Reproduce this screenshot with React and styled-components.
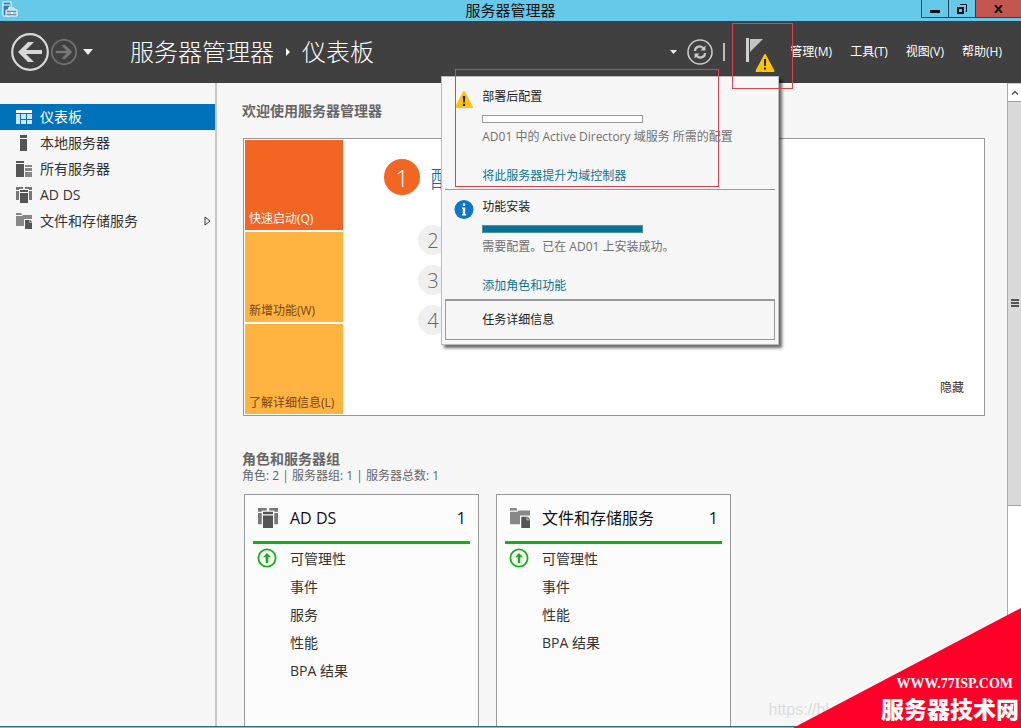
import React from 'react'
import styled, { createGlobalStyle } from 'styled-components'

const GlobalStyle = createGlobalStyle`
    *, *::before, *::after{
        box-sizing: border-box;
    }

    body{
        margin: 0;
        overflow: hidden;
        font-family: 'Open Sans', 'Noto Sans CJK SC', sans-serif;
        font-size: 14px;
        color: #333;
    }

    button{
        font: inherit;
        color: inherit;
        background: none;
        border: none;
        padding: 0;
        cursor: pointer;
    }

    h1, h2, h3, p, ul, ol{
        margin: 0;
        padding: 0;
        font-size: inherit;
        font-weight: 400;
        list-style: none;
    }

    a{
        color: inherit;
        text-decoration: none;
    }

    svg{
        display: block;
        flex: none;
    }
`;

const Window = styled.div`
    position: relative;
    display: flex;
    flex-direction: column;
    height: 100vh;
    overflow: hidden;
    background: #f7f7f7;
`;

const TitleBar = styled.div`
    display: grid;
    grid-template-columns: 1fr auto 1fr;
    height: 21px;
    flex: none;
    background: #66c9e9;
`;

const AppIcon = styled.div`
    padding: 1px 2px;
`;

const WindowTitle = styled.h1`
    font-size: 15px;
    line-height: 20px;
    color: #111;
`;

const WindowControls = styled.div`
    display: flex;
    justify-content: flex-end;
    height: 18px;
`;

const WindowButton = styled.button`
    display: flex;
    justify-content: center;
    align-items: center;
    width: ${({ $danger }) => ($danger ? '46px' : '27px')};
    background: ${({ $danger }) => ($danger ? '#c4554f' : 'transparent')};
    border: 1px solid #1f4452;
    border-top: none;
    border-right: none;
`;

const Header = styled.header`
    position: relative;
    z-index: 10;
    display: flex;
    align-items: center;
    height: 62px;
    flex: none;
    padding: 0 19px 0 11px;
    background: #404040;
    color: #fff;
`;

const History = styled.div`
    display: flex;
    align-items: center;
    gap: 2px;
    width: 119px;
`;

const HistoryMenu = styled.button`
    padding: 0 4px;
`;

const Breadcrumb = styled.div`
    display: flex;
    align-items: center;
    gap: 12px;
    font-size: 24px;
    font-weight: 300;
    line-height: 36px;
    white-space: nowrap;
`;

const HeaderTools = styled.div`
    display: flex;
    align-items: center;
    align-self: stretch;
    margin-left: auto;
`;

const RefreshGroup = styled.div`
    display: flex;
    align-items: center;
    gap: 10px;
`;

const Separator = styled.span`
    width: 2px;
    height: 18px;
    background: #bbb;
`;

const Notifications = styled.div`
    position: relative;
    align-self: stretch;
    width: 52px;
    margin-left: 7px;
`;

const FlagButton = styled.button`
    display: block;
    padding: 16px 8px 0 13px;
`;

const Highlight = styled.span`
    position: absolute;
    z-index: 2;
    border: 1px solid #d8444f;
    pointer-events: none;
`;

const FlagHighlight = styled(Highlight)`
    top: 2px;
    left: 0;
    width: 61px;
    height: 66px;
`;

const TaskHighlight = styled(Highlight)`
    top: -8px;
    left: 13px;
    width: 264px;
    height: 118px;
`;

const Menu = styled.nav`
    display: flex;
    gap: 18px;
    margin-left: 6px;
    font-size: 12px;
    line-height: 20px;
    white-space: nowrap;
`;

const Popup = styled.div`
    position: absolute;
    top: 55px;
    right: 5px;
    width: 338px;
    padding: 3px 3px 4px;
    background: #f7f7f7;
    border: 1px solid #bbb;
    box-shadow: 3px 3px 3px rgba(0, 0, 0, 0.6);
    font-size: 12px;
    line-height: 20px;
    color: #222;
    white-space: nowrap;
`;

const Task = styled.section`
    display: flex;
    gap: 8px;
    height: 110px;
    padding: 7px 0 0 9px;
    border-bottom: 1px solid #999;
`;

const TaskIcon = styled.div`
    width: 20px;
    padding-top: 3px;
`;

const TaskProgress = styled.div`
    width: 161px;
    height: 8px;
    margin: 8px 0 4px;
    background: ${({ $done }) => ($done ? '#0a7395' : '#fff')};
    border: 1px solid ${({ $done }) => ($done ? '#4f8fa5' : '#999')};
`;

const TaskText = styled.p`
    color: #707070;
`;

const TaskLink = styled.a`
    display: block;
    margin-top: 19px;
    color: #0a7395;
`;

const DetailsButton = styled.button`
    display: block;
    width: 100%;
    height: 40px;
    padding-left: 36px;
    border: 1px solid #999;
    text-align: left;
`;

const Body = styled.div`
    display: flex;
    flex: 1;
    min-height: 0;
`;

const Sidebar = styled.nav`
    width: 217px;
    flex: none;
    padding-top: 21px;
    border-right: 2px solid #c8c8c8;
`;

const SidebarLink = styled.a`
    display: flex;
    align-items: center;
    gap: 8px;
    height: 26px;
    padding: 0 3px 0 16px;
    background: ${({ $active }) => ($active ? '#0072bc' : 'transparent')};
    color: ${({ $active }) => ($active ? '#fff' : '#333')};
    white-space: nowrap;
`;

const SidebarLabel = styled.span`
    flex: 1;
    line-height: 20px;
`;

const Content = styled.main`
    display: flex;
    flex-direction: column;
    flex: 1;
    min-width: 0;
    padding: 18px 22px 0 25px;
    overflow: hidden;
`;

const SectionTitle = styled.h2`
    font-size: 14px;
    font-weight: 700;
    line-height: 20px;
    color: #666;
`;

const Welcome = styled.section`
    display: flex;
    flex: none;
    margin: 17px 0 33px 1px;
    padding: 1px;
    background: #fff;
    border: 1px solid #999;
`;

const Tiles = styled.div`
    display: flex;
    flex-direction: column;
    gap: 2px;
    width: 98px;
`;

const Tile = styled.button`
    display: flex;
    align-items: flex-end;
    height: 90px;
    padding: 0 4px 1px;
    background: ${({ $active }) => ($active ? '#f26522' : '#ffb340')};
    color: ${({ $active }) => ($active ? '#fff' : '#7a4310')};
    font-size: 12px;
    line-height: 20px;
    white-space: nowrap;
`;

const Steps = styled.ol`
    flex: 1;
    padding: 19px 0 0 41px;
`;

const Step = styled.li`
    display: flex;
    align-items: center;
    gap: 10px;
    height: ${({ $main }) => ($main ? '36px' : '40px')};
    margin-left: ${({ $main }) => ($main ? '0' : '34px')};
    margin-bottom: ${({ $main }) => ($main ? '25px' : '0')};
    font-size: 24px;
    font-weight: 300;
    color: #0b72a8;
`;

const StepNumber = styled.span`
    display: flex;
    justify-content: center;
    align-items: center;
    width: ${({ $main }) => ($main ? '36px' : '30px')};
    height: ${({ $main }) => ($main ? '36px' : '30px')};
    border-radius: 50%;
    background: ${({ $main }) => ($main ? '#f26522' : '#f0f0f0')};
    color: ${({ $main }) => ($main ? '#fff' : '#666')};
    font-size: ${({ $main }) => ($main ? '24px' : '20px')};
`;

const HideButton = styled.button`
    align-self: flex-end;
    margin: 0 19px 16px 0;
    font-size: 12px;
    line-height: 20px;
`;

const Summary = styled.p`
    font-size: 12px;
    line-height: 14px;
    color: #666;
`;

const Cards = styled.div`
    display: flex;
    flex: 1;
    gap: 17px;
    margin: 11px 0 0 2px;
`;

const Card = styled.article`
    width: 235px;
    padding: 0 8px;
    background: #fcfcfc;
    border: 1px solid #999;
    border-bottom: none;
`;

const CardHeader = styled.header`
    display: flex;
    align-items: center;
    gap: 12px;
    height: 49px;
    padding: 0 4px 0 5px;
    border-bottom: 3px solid #14b114;
    font-size: 16px;
    line-height: 24px;
    color: #111;
`;

const CardTitle = styled.h3`
    flex: 1;
`;

const CardRow = styled.li`
    display: flex;
    align-items: center;
    gap: 13px;
    height: 28px;
    padding-left: 4px;
`;

const CardIcon = styled.span`
    width: 20px;
    height: 20px;
`;

const ScrollBar = styled.div`
    display: flex;
    flex-direction: column;
    width: 14px;
    flex: none;
    background: #fff;
    border-left: 1px solid #aaa;
`;

const ScrollUp = styled.button`
    display: flex;
    justify-content: center;
    align-items: center;
    height: 18px;
    border-top: 1px solid #ccc;
`;

const ScrollThumb = styled.div`
    display: flex;
    justify-content: center;
    align-items: center;
    flex: 0 0 63%;
    background: #dadada;
    border: 1px solid #a0a0a0;
    border-width: 1px 0;
`;

const StatusLine = styled.div`
    height: 2px;
    flex: none;
    background: #8dbcc9;
    border-top: 1px solid #2f6c7c;
`;

const Ribbon = styled.div`
    position: absolute;
    z-index: 20;
    right: 0;
    bottom: 0;
    display: flex;
    flex-direction: column;
    align-items: flex-end;
    justify-content: flex-end;
    width: 228px;
    height: 120px;
    padding: 0 2px 1px 0;
    background: #ff0029;
    clip-path: polygon(100% 0, 100% 100%, 0 100%);
    color: #fff;
    white-space: nowrap;
`;

const RibbonUrl = styled.span`
    padding-right: 6px;
    font-family: 'Liberation Serif', serif;
    font-size: 14px;
    font-weight: 700;
    line-height: 16px;
`;

const RibbonName = styled.span`
    font-size: 23px;
    font-weight: 900;
    line-height: 35px;
`;

const Watermark = styled.span`
    position: absolute;
    right: 192px;
    bottom: 8px;
    font-family: 'Liberation Sans', sans-serif;
    font-size: 16px;
    line-height: 20px;
    color: #dcdcdc;
`;

const LogoIcon = () => (
    <svg width="17" height="17" viewBox="0 0 17 17">
        <path d="M1 1h8v5H7v9H1z" fill="#2b7fc0" stroke="#fff" />
        <path d="M1 4h7" stroke="#fff" />
        <path d="M4 9h11v6H4z" fill="#6e93ad" stroke="#fff" />
        <path d="M7 9V7h5v2M4 12h11" fill="none" stroke="#fff" />
        <path d="M9 11h2v2H9z" fill="#fff" />
    </svg>
)

const CircleArrow = ({ size, color, back }) => (
    <svg width={size} height={size} viewBox="0 0 38 38">
        <circle cx="19" cy="19" r="17.8" fill="none" stroke={color} strokeWidth="2.2" />
        <path
            d="M7 19l10-10h6l-8 8h16v4H15l8 8h-6z"
            fill={color}
            transform={back ? undefined : 'rotate(180 19 19)'}
        />
    </svg>
)

const CaretDown = ({ width = 10, height = 6 }) => (
    <svg width={width} height={height} viewBox="0 0 10 6" preserveAspectRatio="none">
        <path d="M0 0h10L5 6z" fill="#eee" />
    </svg>
)

const CaretRight = () => (
    <svg width="4" height="8" viewBox="0 0 4 8">
        <path d="M0 0l4 4-4 4z" fill="#fff" />
    </svg>
)

const RefreshIcon = () => (
    <svg width="26" height="26" viewBox="0 0 26 26" fill="none" stroke="#c8c8c8">
        <circle cx="13" cy="13" r="12" strokeWidth="1.6" />
        <path d="M8 12c0-5 6-6 8.500-2.500M18 14c0 5-6 6-8.500 2.500" strokeWidth="2.200" />
        <path d="M18.500 6.500v5h-5zM7.500 19.500v-5h5z" fill="#c8c8c8" stroke="none" />
    </svg>
)

const WarningTriangle = () => (
    <svg width="20" height="20" viewBox="0 0 20 20">
        <path d="M10 2l8 15H2z" fill="#ffc20e" stroke="#ffc20e" strokeWidth="2" strokeLinejoin="round" />
        <path d="M8.800 6h2.400l-.4 6.500H9.200zM8.900 13.700h2.200v2.200H8.900z" fill="#222" />
    </svg>
)

const FlagIcon = () => (
    <svg width="31" height="37" viewBox="0 0 31 37">
        <path d="M1 1h3v24H1z" fill="#d0d0d0" />
        <path d="M5 2h13L5 15z" fill="#c4c4c4" />
        <path d="M20 18l8.500 16h-17z" fill="#ffc20e" stroke="#ffc20e" strokeWidth="2" strokeLinejoin="round" />
        <path d="M18.900 22h2.200l-.3 7h-1.600zM19 30.500h2v2h-2z" fill="#222" />
    </svg>
)

const InfoIcon = () => (
    <svg width="20" height="20" viewBox="0 0 20 20">
        <circle cx="10" cy="9.500" r="9.500" fill="#0a78c8" />
        <path d="M8.800 3.500h2.400v2.400H8.800zM8 7.500h3.200v6.400h.8v1.600H8v-1.600h.8V9H8z" fill="#fff" />
    </svg>
)

const DashboardIcon = () => (
    <svg width="16" height="16" viewBox="0 0 16 16" fill="#cfe6f6">
        <path d="M0 1h16v3H0z" fill="#fff" />
        <path d="M0 5h4v10H0zM5 5h5v5H5zM11 5h5v5h-5zM5 11h5v4H5zM11 11h5v4h-5z" />
    </svg>
)

const ServerIcon = () => (
    <svg width="16" height="16" viewBox="0 0 16 16" fill="#555">
        <path d="M4 0h7v3H4zM4 4h7v12H4z" />
    </svg>
)

const ServersIcon = () => (
    <svg width="16" height="16" viewBox="0 0 16 16" fill="#555">
        <path d="M0 0h8v2H0zM0 3h8v13H0z" />
        <path d="M9 4h7v2H9zM9 7h7v3H9zM9 11h7v5H9z" fill="#888" />
    </svg>
)

const DirectoryIcon = ({ size = 16 }) => (
    <svg width={size} height={size} viewBox="0 0 16 16">
        <path d="M0 0h7v2H3v1H0zM9 0h7v3h-3V2H9zM0 4h3v9H0zM13 4h3v9h-3z" fill="#777" />
        <path d="M4 3h8v2H4zM4 6h8v10H4z" fill="#555" />
    </svg>
)

const StorageIcon = ({ size = 16 }) => (
    <svg width={size} height={size} viewBox="0 0 16 16">
        <path d="M0 0h5l1 2H0zM0 3h6l1-1h9v4H8v7H0z" fill="#888" />
        <path d="M9 7h5l2 2v7H9z" fill="#555" />
        <path d="M13.500 7v2.500H16" fill="none" stroke="#ddd" strokeWidth=".6" />
    </svg>
)

const ExpandIcon = () => (
    <svg width="8" height="10" viewBox="0 0 8 10">
        <path d="M1 1l5 4-5 4z" fill="none" stroke="#333" />
    </svg>
)

const HealthyIcon = () => (
    <svg width="20" height="20" viewBox="0 0 20 20">
        <circle cx="10" cy="10" r="8.600" fill="#fff" stroke="#14b114" strokeWidth="1.800" />
        <path d="M10 5l4 4.300h-2.700V15H8.700V9.300H6z" fill="#14b114" />
    </svg>
)

const sidebarItems = [
    { label: '仪表板', icon: <DashboardIcon />, active: true },
    { label: '本地服务器', icon: <ServerIcon /> },
    { label: '所有服务器', icon: <ServersIcon /> },
    { label: 'AD DS', icon: <DirectoryIcon /> },
    { label: '文件和存储服务', icon: <StorageIcon />, expandable: true },
];

const menuItems = ['管理(M)', '工具(T)', '视图(V)', '帮助(H)'];

const tiles = ['快速启动(Q)', '新增功能(W)', '了解详细信息(L)'];

const roles = [
    {
        title: 'AD DS',
        count: 1,
        icon: <DirectoryIcon size={20} />,
        rows: ['可管理性', '事件', '服务', '性能', 'BPA 结果'],
    },
    {
        title: '文件和存储服务',
        count: 1,
        icon: <StorageIcon size={20} />,
        rows: ['可管理性', '事件', '性能', 'BPA 结果'],
    },
];

const NotificationPopup = () => (
    <Popup>
        <TaskHighlight />
        <Task>
            <TaskIcon><WarningTriangle /></TaskIcon>
            <div>
                <h3>部署后配置</h3>
                <TaskProgress />
                <TaskText>AD01 中的 Active Directory 域服务 所需的配置</TaskText>
                <TaskLink href="#promote">将此服务器提升为域控制器</TaskLink>
            </div>
        </Task>
        <Task>
            <TaskIcon><InfoIcon /></TaskIcon>
            <div>
                <h3>功能安装</h3>
                <TaskProgress $done />
                <TaskText>需要配置。已在 AD01 上安装成功。</TaskText>
                <TaskLink href="#add-roles">添加角色和功能</TaskLink>
            </div>
        </Task>
        <DetailsButton>任务详细信息</DetailsButton>
    </Popup>
)

const App = () => {
    return (
        <Window>
            <GlobalStyle />
            <TitleBar>
                <AppIcon><LogoIcon /></AppIcon>
                <WindowTitle>服务器管理器</WindowTitle>
                <WindowControls>
                    <WindowButton aria-label="最小化">
                        <svg width="10" height="10"><path d="M0 6h10v3H0z" fill="#111" /></svg>
                    </WindowButton>
                    <WindowButton aria-label="还原">
                        <svg width="10" height="10" viewBox="0 0 10 10" fill="none" stroke="#111">
                            <path d="M1 4h5v5H1z" strokeWidth="2" />
                            <path d="M3 .5h6.500V8" />
                        </svg>
                    </WindowButton>
                    <WindowButton $danger aria-label="关闭">
                        <svg width="9" height="8" viewBox="0 0 9 8">
                            <path d="M1 0l7 8M8 0L1 8" stroke="#111" strokeWidth="2" />
                        </svg>
                    </WindowButton>
                </WindowControls>
            </TitleBar>
            <Header>
                <History>
                    <button aria-label="后退"><CircleArrow size={38} color="#d8d8d8" back /></button>
                    <button aria-label="前进"><CircleArrow size={26} color="#777" /></button>
                    <HistoryMenu aria-label="历史记录"><CaretDown /></HistoryMenu>
                </History>
                <Breadcrumb>
                    <span>服务器管理器</span>
                    <CaretRight />
                    <span>仪表板</span>
                </Breadcrumb>
                <HeaderTools>
                    <RefreshGroup>
                        <button aria-label="选项"><CaretDown width={7} height={4} /></button>
                        <button aria-label="刷新"><RefreshIcon /></button>
                        <Separator />
                    </RefreshGroup>
                    <Notifications>
                        <FlagButton aria-label="通知"><FlagIcon /></FlagButton>
                        <NotificationPopup />
                        <FlagHighlight />
                    </Notifications>
                    <Menu>
                        {menuItems.map((item) => (
                            <button key={item}>{item}</button>
                        ))}
                    </Menu>
                </HeaderTools>
            </Header>
            <Body>
                <Sidebar>
                    {sidebarItems.map(({ label, icon, active, expandable }) => (
                        <SidebarLink href="#" key={label} $active={active}>
                            {icon}
                            <SidebarLabel>{label}</SidebarLabel>
                            {expandable && <ExpandIcon />}
                        </SidebarLink>
                    ))}
                </Sidebar>
                <Content>
                    <SectionTitle>欢迎使用服务器管理器</SectionTitle>
                    <Welcome>
                        <Tiles>
                            {tiles.map((tile, index) => (
                                <Tile key={tile} $active={index === 0}>{tile}</Tile>
                            ))}
                        </Tiles>
                        <Steps>
                            <Step $main>
                                <StepNumber $main>1</StepNumber>
                                配
                            </Step>
                            {[2, 3, 4].map((number) => (
                                <Step key={number}>
                                    <StepNumber>{number}</StepNumber>
                                </Step>
                            ))}
                        </Steps>
                        <HideButton>隐藏</HideButton>
                    </Welcome>
                    <SectionTitle>角色和服务器组</SectionTitle>
                    <Summary>角色: 2 | 服务器组: 1 | 服务器总数: 1</Summary>
                    <Cards>
                        {roles.map(({ title, count, icon, rows }) => (
                            <Card key={title}>
                                <CardHeader>
                                    {icon}
                                    <CardTitle>{title}</CardTitle>
                                    <span>{count}</span>
                                </CardHeader>
                                <ul>
                                    {rows.map((row, index) => (
                                        <CardRow key={row}>
                                            <CardIcon>{index === 0 && <HealthyIcon />}</CardIcon>
                                            {row}
                                        </CardRow>
                                    ))}
                                </ul>
                            </Card>
                        ))}
                    </Cards>
                </Content>
                <ScrollBar>
                    <ScrollUp aria-label="向上滚动">
                        <svg width="8" height="5" viewBox="0 0 8 5">
                            <path d="M1 4.500l3-3 3 3" fill="none" stroke="#555" strokeWidth="1.500" />
                        </svg>
                    </ScrollUp>
                    <ScrollThumb>
                        <svg width="8" height="9"><path d="M0 0h8v2H0zM0 3h8v2H0zM0 6h8v2H0z" fill="#555" /></svg>
                    </ScrollThumb>
                </ScrollBar>
            </Body>
            <StatusLine />
            <Watermark>https://bl</Watermark>
            <Ribbon>
                <RibbonUrl>WWW.77ISP.COM</RibbonUrl>
                <RibbonName>服务器技术网</RibbonName>
            </Ribbon>
        </Window>
    )
}

export default App
